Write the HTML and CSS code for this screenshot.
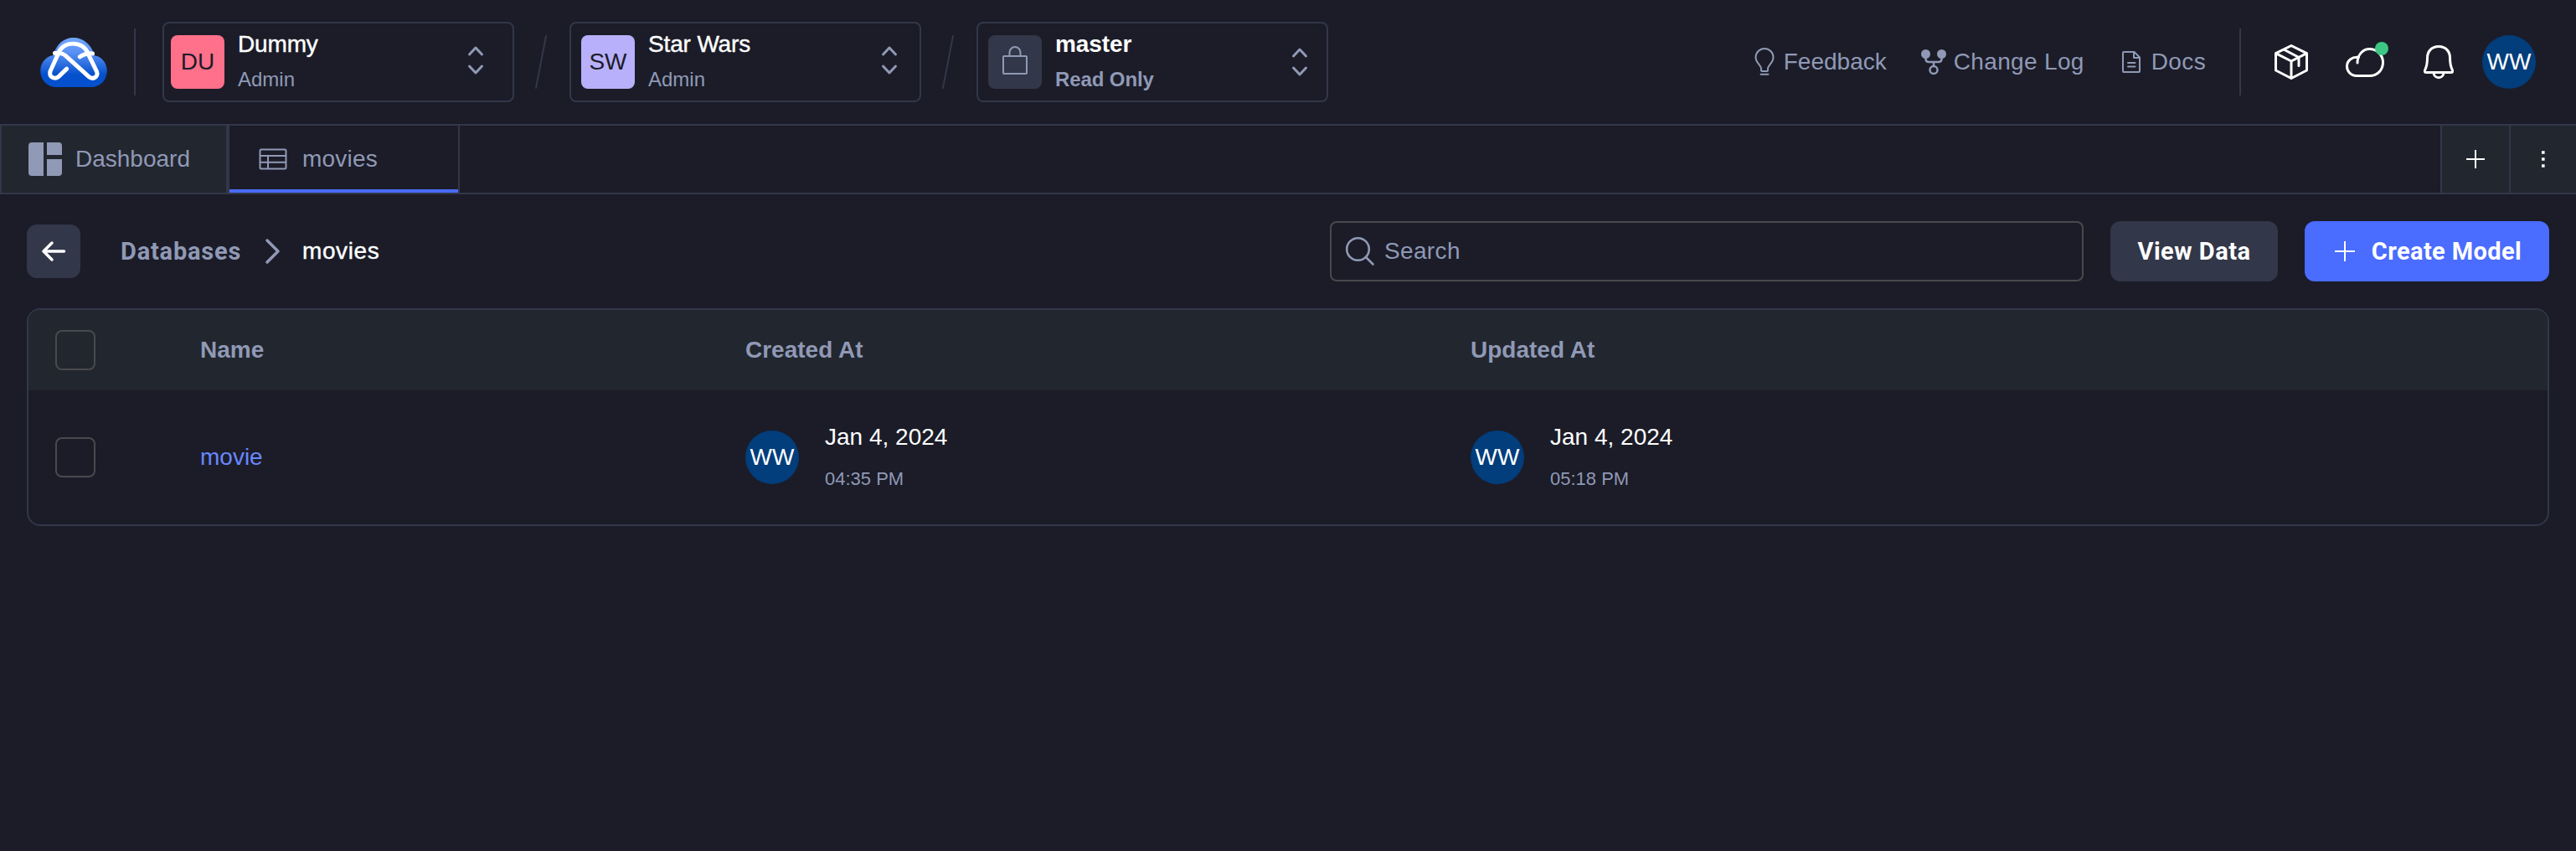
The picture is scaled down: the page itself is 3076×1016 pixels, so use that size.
FILE: index.html
```html
<!DOCTYPE html>
<html lang="en">
<head>
<meta charset="utf-8">
<title>movies</title>
<link rel="stylesheet" href="styles.css">
</head>
<body>
<header class="topbar">
  <svg class="logo" viewBox="0 0 240 178">
    <defs>
      <linearGradient id="sky" x1="0" y1="0" x2="0" y2="178" gradientUnits="userSpaceOnUse">
        <stop offset="0" stop-color="#72a8ff"/><stop offset=".3" stop-color="#5990f5"/><stop offset=".75" stop-color="#0450cd"/><stop offset="1" stop-color="#0450cd"/>
      </linearGradient>
    </defs>
    <path fill="url(#sky)" d="M46 63C58 24 84 0 119 0S184 24 195 64C222 68 240 91 240 119C240 153 215 178 182 178H58C25 178 0 153 0 119C0 90 20 67 46 63Z"/>
    <g fill="none" stroke="#fff" stroke-width="15" stroke-linecap="round" stroke-linejoin="round">
      <path d="M95 112L66 140C50 152 31 142 35 122L65 56C81 10 154 10 171 56L203 122C210 142 188 153 174 140L92 66C81 55 70 54 52 56"/>
      <path d="M142 69C155 60 171 55 188 57"/>
    </g>
  </svg>
  <span class="rule"></span>
  <div class="picker first">
    <span class="tile pink">DU</span>
    <div class="labels"><span class="title">Dummy</span><span class="sub">Admin</span></div>
    <svg class="updown" viewBox="0 0 18 34"><path d="M1.500 10L9 2L16.500 10M1.500 24L9 32L16.500 24"/></svg>
  </div>
  <svg class="slash" viewBox="0 0 16 64"><path d="M14 1L2 63"/></svg>
  <div class="picker">
    <span class="tile violet">SW</span>
    <div class="labels"><span class="title">Star Wars</span><span class="sub">Admin</span></div>
    <svg class="updown" viewBox="0 0 18 34"><path d="M1.500 10L9 2L16.500 10M1.500 24L9 32L16.500 24"/></svg>
  </div>
  <svg class="slash" viewBox="0 0 16 64"><path d="M14 1L2 63"/></svg>
  <div class="picker branch">
    <span class="tile slate"><svg class="lock" viewBox="0 0 30 34"><path d="M2 12H28a1 1 0 0 1 1 1V32a1 1 0 0 1-1 1H2a1 1 0 0 1-1-1V13a1 1 0 0 1 1-1ZM8.500 12V8a6.500 7 0 0 1 13 0V12"/></svg></span>
    <div class="labels"><span class="title">master</span><span class="sub">Read Only</span></div>
    <svg class="updown" viewBox="0 0 18 34"><path d="M1.500 10L9 2L16.500 10M1.500 24L9 32L16.500 24"/></svg>
  </div>

  <nav class="links">
    <a class="feedback"><svg width="24" height="34" viewBox="0 0 24 34"><path d="M8 27V24.500C8 21 1.500 18 1.500 11.500A10.500 10.500 0 0 1 22.500 11.500C22.500 18 16 21 16 24.500V27Q16 28 15 28H9Q8 28 8 27ZM7.500 31.800H16.500"/></svg><span>Feedback</span></a>
    <a class="changelog"><svg width="30" height="30" viewBox="0 0 30 30"><circle class="solid" cx="5.500" cy="5.500" r="5.500"/><circle class="solid" cx="24.500" cy="5.500" r="5.500"/><circle cx="15" cy="24.500" r="4.500"/><path d="M5.500 9V12Q6 15 9 15H21Q24 15 24.500 12V9M15 15V20"/></svg><span>Change Log</span></a>
    <a class="docs"><svg width="22" height="26" viewBox="0 0 22 26"><path d="M2 1H14.500L21 7.500V24Q21 25 20 25H2Q1 25 1 24V2Q1 1 2 1ZM14 1V8H21M7 14H15.500M7 18.500H15.500"/></svg><span>Docs</span></a>
  </nav>
  <span class="rule"></span>
  <div class="actions">
    <svg class="cube" width="40" height="42" viewBox="0 0 40 42"><path d="M20 1.500L38.500 10.700V31L20 40.500L1.500 31V10.700ZM1.500 10.700L20 20L38.500 10.700M20 20V40.500M11 6L29 15.500V25.500"/></svg>
    <span class="sync">
      <svg width="46" height="35" viewBox="0 0 46 35"><path d="M14 18C14 9 20 1.500 28.500 1.500C37 1.500 44.500 8.500 44.500 17.500C44.500 26.500 38 33.500 28.500 33.500H13C6 33.500 1.500 28 1.500 22.300C1.500 15 8 10.500 15.500 11.500"/></svg>
      <i class="dot"></i>
    </span>
    <svg class="bell" width="36" height="40" viewBox="0 0 36 40"><path d="M18 1.500C9 1.500 4.500 8 4.500 15C4.500 23 3.500 26 1.500 30Q1 32.500 3 32.500H33Q35 32.500 34.500 30C32.500 26 31.500 23 31.500 15C31.500 8 27 1.500 18 1.500ZM12 33C12.500 40.500 23.500 40.500 24 33"/></svg>
    <span class="avatar">WW</span>
  </div>
</header>

<div class="tabs">
  <div class="tab home"><svg width="40" height="40" viewBox="0 0 40 40"><path d="M4 0H18V40H4a4 4 0 0 1-4-4V4a4 4 0 0 1 4-4ZM22 0H36a4 4 0 0 1 4 4V15H22ZM22 20H40V36a4 4 0 0 1-4 4H22Z"/></svg><span>Dashboard</span></div>
  <div class="tab current"><svg width="34" height="26" viewBox="0 0 34 26"><path d="M3 1.500H31Q32.500 1.500 32.500 3V23Q32.500 24.500 31 24.500H3Q1.500 24.500 1.500 23V3Q1.500 1.500 3 1.500ZM1.500 9H32.500M1.500 16.800H32.500M11 9V24.500"/></svg><span>movies</span></div>
  <div class="tab-tool add"><svg width="22" height="22" viewBox="0 0 22 22"><path d="M11 0V22M0 11H22"/></svg></div>
  <div class="tab-tool more"><svg width="4" height="20" viewBox="0 0 4 20"><path d="M0 .3H3.600V3.700H0ZM0 8.300H3.600V11.700H0ZM0 16.300H3.600V19.700H0Z"/></svg></div>
</div>

<main>
  <div class="toolbar">
    <button class="back"><svg width="28" height="24" viewBox="0 0 28 24"><path d="M12 2L2 12L12 22M2 12H26.500"/></svg></button>
    <span class="crumb">Databases</span>
    <svg class="sep" width="18" height="30" viewBox="0 0 18 30"><path d="M2 2L15 15L2 28"/></svg>
    <span class="here">movies</span>
    <label class="search"><svg width="34" height="34" viewBox="0 0 34 34"><circle cx="14.500" cy="14.500" r="13.300"/><path d="M24 24L32.500 32.500"/></svg><span>Search</span></label>
    <button class="btn view">View Data</button>
    <button class="btn create"><svg width="24" height="24" viewBox="0 0 24 24"><path d="M12 0V24M0 12H24"/></svg><span>Create Model</span></button>
  </div>

  <section class="table">
    <div class="row head"><i class="check"></i><span>Name</span><span>Created At</span><span>Updated At</span></div>
    <div class="row">
      <i class="check"></i>
      <a class="model">movie</a>
      <div class="stamp"><span class="avatar">WW</span><div class="when"><span>Jan 4, 2024</span><small>04:35 PM</small></div></div>
      <div class="stamp"><span class="avatar">WW</span><div class="when"><span>Jan 4, 2024</span><small>05:18 PM</small></div></div>
    </div>
  </section>
</main>
</body>
</html>
```
FILE: styles.css
```css
* { box-sizing: border-box; }
body {
  margin: 0;
  min-height: 1016px;
  background: #1b1c28;
  color: #fff;
  font: 28px/42px "Liberation Sans", Arial, sans-serif;
  white-space: nowrap;
}
svg { display: block; flex: none; fill: none; stroke: #9099b5; stroke-width: 2; stroke-linecap: round; stroke-linejoin: round; overflow: visible; }
button { border: 0; padding: 0; color: #fff; font: inherit; }

.topbar { display: flex; align-items: center; height: 148px; padding: 0 48px; }
.logo { width: 80px; height: 59px; stroke: none; }
.rule { width: 2px; height: 80px; margin-left: 32px; background: #323749; }
.picker {
  display: flex; align-items: center; flex: none;
  width: 420px; height: 96px; margin-left: 26px; padding: 0 27px 0 12px;
  border: 2px solid #323749; border-radius: 8px;
}
.picker.first { margin-left: 32px; padding: 0 35px 0 8px; }
.picker.branch { padding-right: 23px; }
.tile { display: grid; place-items: center; width: 64px; height: 64px; border-radius: 8px; color: #1b1c28; }
.pink { background: #ff708b; }
.violet { background: #b8b0fa; }
.slate { background: #323749; }
.lock { width: 30px; height: 34px; margin-top: -4px; }
.labels { display: flex; flex-direction: column; flex: 1; margin: -1px 0 0 16px; }
.title { -webkit-text-stroke: .4px; letter-spacing: -.15px; }
.sub { color: #9099b5; font-size: 24px; }
.branch .title, .branch .sub { font-weight: 700; letter-spacing: -.1px; -webkit-text-stroke: 0; }
.updown { width: 18px; height: 34px; margin-top: -4px; stroke-width: 3; }
.branch .updown { margin-top: 0; }
.slash { width: 16px; height: 64px; margin-left: 24px; stroke: #323749; }
.links { display: flex; align-items: center; margin-left: auto; color: #9099b5; }
.links a { display: flex; align-items: center; }
.feedback svg { margin-right: 11px; }
.changelog { margin-left: 41px; letter-spacing: .35px; }
.changelog svg { margin-right: 9px; stroke-width: 2.500px; }
.changelog .solid { fill: #9099b5; stroke: none; }
.docs { margin-left: 45px; letter-spacing: .35px; }
.docs svg { margin-right: 13px; }
.links + .rule { margin-left: 40px; }
.actions { display: flex; align-items: center; margin-left: 40px; }
.actions svg { stroke: #fff; stroke-width: 3; }
.sync { position: relative; margin-left: 45px; }
.dot { position: absolute; right: -5px; top: -7px; width: 16px; height: 16px; border-radius: 50%; background: #3cc784; }
.bell { margin-left: 47px; }
.avatar { display: grid; place-items: center; flex: none; width: 64px; height: 64px; border-radius: 50%; background: #023d7c; color: #fff; }
.actions .avatar { margin-left: 34px; }

.tabs { display: flex; height: 84px; border: solid #323749; border-width: 2px 0; color: #9099b5; }
.tab { display: flex; align-items: center; }
.home { width: 274px; padding-left: 32px; gap: 16px; border: solid #323749; border-width: 0 4px 0 2px; background: #22262f; }
.home svg { fill: #9099b5; stroke: none; }
.current { width: 275px; padding-left: 35px; gap: 18px; border-right: 2px solid #323749; box-shadow: inset 0 -4px #4a6cff; letter-spacing: .2px; }
.tab-tool { display: grid; place-items: center; width: 82px; border-left: 2px solid #323749; background: #22262f; }
.add { margin-left: auto; }
.add svg { stroke: #fff; stroke-linecap: butt; }
.more { width: 80px; }
.more svg { fill: #fff; stroke: none; }

main { padding: 32px 32px 0; }
.toolbar { display: flex; align-items: center; height: 72px; }
.back { display: grid; place-items: center; width: 64px; height: 64px; border-radius: 12px; background: #323749; }
.back svg { stroke: #fff; stroke-width: 3.500; }
.crumb { width: 173px; margin-left: 48px; color: #9099b5; font-family: Roboto, sans-serif; font-size: 29px; font-weight: 700; letter-spacing: .8px; }
.sep { stroke-width: 3.500; }
.here { margin-left: 26px; letter-spacing: .6px; -webkit-text-stroke: .4px; }
.search { display: flex; align-items: center; gap: 12px; width: 900px; height: 72px; margin-left: auto; padding-left: 17px; border: 2px solid #49494d; border-radius: 8px; color: #9099b5; letter-spacing: .35px; }
.search svg { stroke-width: 2.600; }
.btn { display: flex; align-items: center; justify-content: center; height: 72px; margin-left: 32px; border-radius: 12px; font-family: Roboto, sans-serif; font-size: 29px; font-weight: 700; letter-spacing: .5px; }
.view { width: 200px; background: #323749; }
.create { width: 292px; gap: 20px; padding-left: 3px; background: #4a6cff; letter-spacing: .4px; }
.create svg { stroke: #fff; stroke-linecap: butt; }

.table { margin-top: 32px; border: 2px solid #323749; border-radius: 16px; overflow: hidden; }
.row { display: grid; grid-template-columns: 173px 651px 866px 1fr; align-items: center; height: 160px; padding-left: 32px; }
.head { height: 96px; background: #22262f; color: #9099b5; font-weight: 700; }
.check { width: 48px; height: 48px; border: 2px solid #49494d; border-radius: 8px; }
.model { color: #6a87ff; }
.stamp { display: flex; align-items: center; gap: 31px; }
.when { display: flex; flex-direction: column; line-height: 50px; margin-top: 2px; }
.when small { font-size: 22px; color: #9099b5; }
```
